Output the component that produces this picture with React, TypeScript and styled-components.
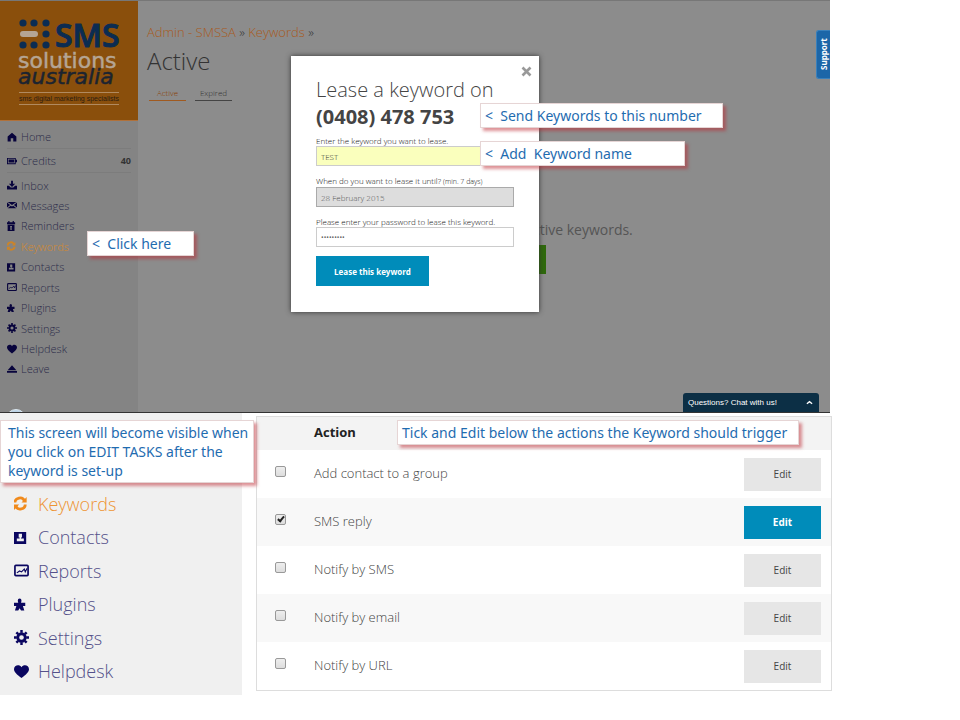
import React from "react";
import styled, { createGlobalStyle, css } from "styled-components";

const GlobalStyle = createGlobalStyle`
  *, *::before, *::after { box-sizing: border-box; }
  body { margin: 0; background: #fff; font-family: "Open Sans", "Noto Sans", sans-serif; }
  button, input { font-family: inherit; }
`;

const Page = styled.div`
  padding-right: 128px;
`;

/* ---------- upper screen ---------- */

const Screen = styled.section`
  position: relative;
  display: grid;
  grid-template-columns: 138px 1fr;
  min-height: 413px;
  margin-right: 2px;
  background: #8c8c8c;
  border-top: 1px solid #777;
  border-bottom: 1px solid #333;
`;

const Sidebar = styled.aside`
  position: relative;
  overflow: hidden;
  background: #848484;
`;

const LogoBox = styled.a`
  display: block;
  height: 120px;
  background: #8a4f0c;
  border-bottom: 1px solid #b0713a;
`;

const TopNav = styled.nav`
  display: flex;
  flex-direction: column;
  padding: 4px 7px 0;
`;

const NavGroup = styled.ul`
  list-style: none;
  margin: 0;
  padding: 0;
  display: flex;
  flex-direction: column;
`;

const MainGroup = styled(NavGroup)`
  min-height: 206px;
  justify-content: space-between;
  padding-top: 2px;
`;

const NavLink = styled.a<{ $active?: boolean; $ruled?: boolean }>`
  display: flex;
  align-items: center;
  height: ${(p) => (p.$ruled ? 24 : 20)}px;
  font-size: 11px;
  font-weight: 300;
  text-decoration: none;
  color: ${(p) => (p.$active ? "#d68a2c" : "#2c2c4a")};
  ${(p) => p.$ruled && css`border-bottom: 1px solid #7c7c7c;`}
  svg {
    width: 10px;
    height: 10px;
    margin-right: 4px;
    color: ${(p) => (p.$active ? "#cc8428" : "#08043c")};
  }
`;

const Count = styled.span`
  margin-left: auto;
  font-size: 9px;
  font-weight: 700;
  color: #333;
`;

const Bubble = styled.span`
  position: absolute;
  left: 6px;
  bottom: -17px;
  width: 20px;
  height: 20px;
  border-radius: 50%;
  background: #bcd3e6;
  border: 1px solid #dce8f0;
`;

const Content = styled.main`
  padding: 20px 9px 0;
`;

const Crumbs = styled.nav`
  font-size: 13px;
  line-height: 22px;
  font-weight: 300;
  color: #333;
  a { color: #a85a1c; text-decoration: none; }
`;

const Heading = styled.h1`
  margin: 0;
  font-size: 24px;
  line-height: 36px;
  font-weight: 300;
  color: #333;
`;

const Tabs = styled.div`
  display: flex;
  gap: 9px;
  padding: 7px 2px 0;
`;

const Tab = styled.button<{ $active?: boolean }>`
  min-width: 37px;
  padding: 0 4px;
  border: 0;
  border-bottom: 1px solid ${(p) => (p.$active ? "#a05a20" : "#444")};
  background: none;
  font-size: 8px;
  line-height: 14px;
  font-weight: 300;
  color: ${(p) => (p.$active ? "#8a3c00" : "#333")};
`;

const Empty = styled.div`
  display: flex;
  flex-direction: column;
  align-items: center;
  padding-top: 118px;
`;

const EmptyText = styled.p`
  margin: 0 0 4px;
  font-size: 14px;
  line-height: 22px;
  color: #555;
`;

const GreenButton = styled.button`
  width: 124px;
  height: 29px;
  border: 0;
  background: #2f6a0c;
  color: #ccc;
  font-size: 8px;
`;

const Overlay = styled.div`
  position: absolute;
  inset: 0;
  display: flex;
  justify-content: center;
  align-items: flex-start;
  padding-top: 55px;
  pointer-events: none;
`;

const Modal = styled.form`
  position: relative;
  width: 248px;
  padding: 20px 25px 26px;
  background: #fff;
  box-shadow: 0 0 5px #333;
  pointer-events: auto;
`;

const Close = styled.button`
  position: absolute;
  top: 10px;
  right: 7px;
  width: 11px;
  height: 11px;
  padding: 0;
  border: 0;
  background: none;
  color: #999;
  svg { display: block; width: 11px; height: 11px; }
`;

const ModalTitle = styled.h2`
  margin: 0 0 5px;
  font-size: 20px;
  line-height: 27px;
  font-weight: 300;
  color: #444;
  white-space: nowrap;
  strong { display: block; font-weight: 700; }
`;

const Field = styled.div`
  display: flex;
  flex-direction: column;
  margin-bottom: 9px;
`;

const Label = styled.label`
  font-size: 8px;
  line-height: 11px;
  font-weight: 300;
  color: #111;
  white-space: nowrap;
  small { font-size: 7px; }
`;

const Input = styled.input<{ $tone?: string }>`
  width: 100%;
  height: 20px;
  padding: 0 4px;
  border: 1px solid ${(p) => (p.$tone === "grey" ? "#aaa" : "#ccc")};
  border-radius: 0;
  background: ${(p) => (p.$tone === "grey" ? "#ddd" : p.$tone === "yellow" ? "#faffbd" : "#fff")};
  color: ${(p) => (p.$tone === "grey" ? "#555" : p.$tone === "yellow" ? "#333" : "#666")};
  font-size: ${(p) => (p.$tone ? 8 : 7)}px;
  font-weight: ${(p) => (p.$tone ? 300 : 400)};
  outline: 0;
`;

const BlueButton = styled.button`
  height: 30px;
  width: 113px;
  border: 0;
  background: #008cba;
  color: #fff;
  font-size: 8px;
  font-weight: 700;
`;

const Callout = styled.div`
  position: absolute;
  z-index: 2;
  padding: 2px 4px;
  background: #fff;
  border: 1px solid #e6d5d5;
  box-shadow: 3px 3px 3px rgba(190, 40, 50, 0.5);
  color: #1f6cb0;
  font-family: "Noto Sans", sans-serif;
  font-size: 14px;
  line-height: 19px;
  white-space: pre;
`;

const NumberCallout = styled(Callout)`
  left: 189px;
  top: 47px;
  width: 243px;
`;
const NameCallout = styled(Callout)`
  left: 189px;
  top: 85px;
  width: 205px;
`;
const ClickCallout = styled(Callout)`
  left: 87px;
  top: 230px;
  width: 107px;
`;
const ScreenCallout = styled(Callout)`
  left: 0;
  top: 7px;
  width: 254px;
  padding: 2px 7px;
`;
const TickCallout = styled(Callout)`
  left: 140px;
  top: 3px;
  width: 402px;
`;

const SupportTab = styled.button`
  position: absolute;
  right: 0;
  top: 29px;
  width: 14px;
  height: 49px;
  padding: 0;
  border: 1px solid #3a80bb;
  border-left: 0;
  border-radius: 0 3px 3px 0;
  background: #1c66a8;
  color: #fff;
  font-size: 8px;
  line-height: 12px;
  font-weight: 700;
  writing-mode: vertical-rl;
  transform: rotate(180deg);
`;

const ChatBar = styled.button`
  position: absolute;
  right: 11px;
  bottom: 0;
  display: flex;
  align-items: center;
  justify-content: space-between;
  width: 136px;
  height: 19px;
  padding: 0 6px 0 5px;
  border: 0;
  border-radius: 3px 3px 0 0;
  background: #0c2f45;
  color: #fff;
  font-family: "Liberation Sans", sans-serif;
  font-size: 8px;
  svg { width: 7px; height: 7px; }
`;

/* ---------- lower screen ---------- */

const Lower = styled.section`
  position: relative;
  display: grid;
  grid-template-columns: 242px 1fr;
  column-gap: 14px;
  align-items: start;
`;

const LowerNav = styled.nav`
  padding: 74px 14px 7px;
  background: #f0f0f0;
`;

const LowerList = styled(NavGroup)`
  min-height: 201px;
  justify-content: space-between;
`;

const LowerLink = styled.a<{ $active?: boolean }>`
  display: flex;
  align-items: center;
  height: 33px;
  font-size: 18px;
  font-weight: 300;
  text-decoration: none;
  color: ${(p) => (p.$active ? "#ee9433" : "#54508a")};
  svg {
    width: 15px;
    height: 15px;
    margin-right: 9px;
    color: ${(p) => (p.$active ? "#f08a1c" : "#0a0660")};
  }
`;

const Panel = styled.div`
  position: relative;
  margin-top: 3px;
  border: 1px solid #ddd;
`;

const Table = styled.table`
  width: 100%;
  border-collapse: collapse;
  th, td { padding: 0; text-align: left; }
  th { height: 33px; padding-bottom: 3px; background: #f3f3f3; font-size: 13px; font-weight: 700; color: #222; }
  td { height: 48px; padding-bottom: 2px; font-size: 13px; font-weight: 300; color: #444; }
  tbody tr:nth-child(even) { background: #f8f8f8; }
  th:first-child, td:first-child { width: 57px; padding-left: 18px; }
  th:last-child, td:last-child { width: 87px; }
  td:last-child { padding-bottom: 0; }
`;

const Check = styled.input`
  appearance: none;
  display: block;
  position: relative;
  width: 11px;
  height: 11px;
  margin: 0 0 3px;
  border: 1px solid #999;
  border-radius: 2px;
  background: linear-gradient(#eee, #ddd);
  &:checked::after {
    content: "";
    position: absolute;
    left: 3px;
    top: 0;
    width: 4px;
    height: 7px;
    border: solid #222;
    border-width: 0 2px 2px 0;
    transform: rotate(40deg);
  }
`;

const Edit = styled.button<{ $on?: boolean }>`
  display: block;
  width: 77px;
  height: 33px;
  border: 0;
  background: ${(p) => (p.$on ? "#008cba" : "#e6e6e6")};
  color: ${(p) => (p.$on ? "#fff" : "#444")};
  font-size: 10px;
  font-weight: ${(p) => (p.$on ? 700 : 400)};
`;

/* ---------- drawings ---------- */

const shapes: Record<string, React.ReactNode> = {
  home: <path d="M8 1 1 7v8h5v-5h4v5h5V7z" />,
  credits: <path fillRule="evenodd" d="M0 3h14v3h2v4h-2v3H0zM1.500 4.500v7h11v-7zM2.500 5.500h9v5h-9z" />,
  inbox: <path d="M6.500 1h3v5H13l-5 5-5-5h3.500zM0 9h3l3 3h4l3-3h3v6H0z" />,
  messages: <path d="M1 3h14L8 8zM0 4l5 4-5 4zM16 4v8l-5-4zM1 13l5-4 2 1.500L10 9l5 4z" />,
  reminders: <path fillRule="evenodd" d="M0 2h2V0h2v2h5V0h2v2h2v3H0zM1 6h11v10H1zM5 8v6h3V8zM6 9h1v4H6z" />,
  keywords: (
    <g fill="none" stroke="currentColor" strokeWidth="3">
      <path d="M1 7c0-5 8-7 10-2" />
      <path d="M12 9c0 5-8 7-10 2" />
      <path d="M13.500 1v6H8zM0 15V9h5.500z" fill="currentColor" stroke="none" />
    </g>
  ),
  contacts: <path fillRule="evenodd" d="M0 2h13v13H0zM5 4v4h1v1H3v3h7.500V9H7.500V8h1V4z" />,
  reports: (
    <g fill="none" stroke="currentColor">
      <rect x="1" y="2.500" width="14" height="11" rx="1" strokeWidth="1.800" />
      <path d="M3 10.500l3-2 2 1 3-3 1 3 2-4" strokeWidth="1.200" />
    </g>
  ),
  plugins: <path d="M4 4a2 2.500 0 1 1 4 0l-.500 2H12v3.500H9.500l1.500 5H7.500L6 12l-1.500 2.500H1l1.500-5H0V6h4.500z" />,
  settings: (
    <g fill="none" stroke="currentColor">
      <circle cx="8" cy="8" r="4" strokeWidth="3" />
      <path d="M8 0v3M8 13v3M0 8h3M13 8h3M2.500 2.500l2 2M11.500 11.500l2 2M13.500 2.500l-2 2M4.500 11.500l-2 2" strokeWidth="2.600" />
    </g>
  ),
  helpdesk: <path d="M8 15C3 11 0 8.500 0 5.500 0 1 6 0 8 3.500 10 0 16 1 16 5.500 16 8.500 13 11 8 15z" />,
  leave: <path d="M8 2l7 8H1zM0 11h16v3H0z" />,
};

const Icon = ({ name }: { name: string }) => (
  <svg viewBox="0 0 16 16" fill="currentColor" aria-hidden="true">
    {shapes[name]}
  </svg>
);

const Logo = () => (
  <svg width="138" height="119" viewBox="0 0 138 119" role="img" aria-label="SMS solutions australia">
    <g fill="#0b2c52">
      {[23, 34, 46].map((x) => (
        <React.Fragment key={x}>
          <circle cx={x} cy="22" r="3.600" />
          <circle cx={x} cy="44" r="3.600" />
        </React.Fragment>
      ))}
      <circle cx="46" cy="33" r="3.600" />
    </g>
    <rect x="20" y="30" width="18" height="6" rx="3" fill="#b5a594" />
    <text x="55" y="46" fontFamily="Open Sans, sans-serif" fontSize="32" fontWeight="600" fill="#0b2c52" stroke="#0b2c52">SMS</text>
    <text x="18" y="67" fontFamily="DejaVu Sans, sans-serif" fontSize="22" fill="#b5a594" stroke="#b5a594" strokeWidth="0.500">solutions</text>
    <text x="18" y="83" fontFamily="DejaVu Sans, sans-serif" fontSize="22" fontStyle="italic" fill="#1c2430" stroke="#1c2430" strokeWidth="0.500">australia</text>
    <path d="M19 91.500h100M19 103.500h100" stroke="#b08a60" />
    <text x="19" y="100" fontFamily="Liberation Sans, sans-serif" fontSize="7" fill="#2a1c10">sms digital marketing specialists</text>
  </svg>
);

const topItems = ["Inbox", "Messages", "Reminders", "Keywords", "Contacts", "Reports", "Plugins", "Settings", "Helpdesk", "Leave"];
const lowerItems = ["Keywords", "Contacts", "Reports", "Plugins", "Settings", "Helpdesk"];
const actions = ["Add contact to a group", "SMS reply", "Notify by SMS", "Notify by email", "Notify by URL"];

export default function App() {
  return (
    <Page>
      <GlobalStyle />
      <Screen>
        <Sidebar>
          <LogoBox href="#"><Logo /></LogoBox>
          <TopNav>
            <NavGroup>
              <li><NavLink href="#" $ruled><Icon name="home" />Home</NavLink></li>
              <li><NavLink href="#" $ruled><Icon name="credits" />Credits<Count>40</Count></NavLink></li>
            </NavGroup>
            <MainGroup>
              {topItems.map((t) => (
                <li key={t}>
                  <NavLink href="#" $active={t === "Keywords"}><Icon name={t.toLowerCase()} />{t}</NavLink>
                </li>
              ))}
            </MainGroup>
          </TopNav>
          <Bubble />
        </Sidebar>
        <Content>
          <Crumbs><a href="#">Admin - SMSSA</a> » <a href="#">Keywords</a> »</Crumbs>
          <Heading>Active</Heading>
          <Tabs>
            <Tab $active>Active</Tab>
            <Tab>Expired</Tab>
          </Tabs>
          <Empty>
            <EmptyText>You currently don't have any active keywords.</EmptyText>
            <GreenButton>Lease a keyword</GreenButton>
          </Empty>
        </Content>
        <SupportTab>Support</SupportTab>
        <ChatBar>
          Questions? Chat with us!
          <svg viewBox="0 0 8 8" fill="none" stroke="currentColor" strokeWidth="1.500"><path d="M1 5.500 4 3l3 2.500" /></svg>
        </ChatBar>
        <Overlay>
          <Modal onSubmit={(e) => e.preventDefault()}>
            <Close type="button" aria-label="Close">
              <svg viewBox="0 0 11 11" stroke="currentColor" strokeWidth="2.600"><path d="M1.500 1.500l8 8M9.500 1.500l-8 8" /></svg>
            </Close>
            <ModalTitle>Lease a keyword on <strong>(0408) 478 753</strong></ModalTitle>
            <Field>
              <Label htmlFor="keyword">Enter the keyword you want to lease.</Label>
              <Input id="keyword" $tone="yellow" defaultValue="TEST" />
            </Field>
            <Field>
              <Label htmlFor="until">When do you want to lease it until? <small>(min. 7 days)</small></Label>
              <Input id="until" $tone="grey" readOnly value="28 February 2015" />
            </Field>
            <Field>
              <Label htmlFor="password">Please enter your password to lease this keyword.</Label>
              <Input id="password" type="password" defaultValue="password1" />
            </Field>
            <BlueButton type="submit">Lease this keyword</BlueButton>
            <NumberCallout>{"<  Send Keywords to this number"}</NumberCallout>
            <NameCallout>{"<  Add  Keyword name"}</NameCallout>
          </Modal>
        </Overlay>
        <ClickCallout>{"<  Click here"}</ClickCallout>
      </Screen>
      <Lower>
        <LowerNav>
          <LowerList>
            {lowerItems.map((t) => (
              <li key={t}>
                <LowerLink href="#" $active={t === "Keywords"}><Icon name={t.toLowerCase()} />{t}</LowerLink>
              </li>
            ))}
          </LowerList>
        </LowerNav>
        <Panel>
          <Table>
            <thead>
              <tr><th /><th>Action</th><th /></tr>
            </thead>
            <tbody>
              {actions.map((a, i) => (
                <tr key={a}>
                  <td><Check type="checkbox" id={`action-${i}`} defaultChecked={i === 1} /></td>
                  <td><label htmlFor={`action-${i}`}>{a}</label></td>
                  <td><Edit $on={i === 1}>Edit</Edit></td>
                </tr>
              ))}
            </tbody>
          </Table>
          <TickCallout>Tick and Edit below the actions the Keyword should trigger</TickCallout>
        </Panel>
        <ScreenCallout>{"This screen will become visible when\nyou click on EDIT TASKS after the\nkeyword is set-up"}</ScreenCallout>
      </Lower>
    </Page>
  );
}
